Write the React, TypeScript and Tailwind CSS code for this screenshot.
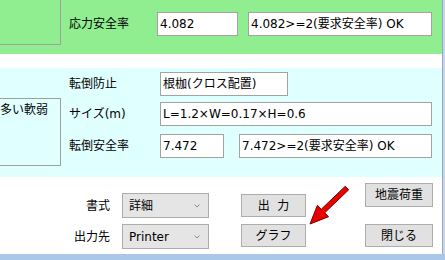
import { ReactNode } from 'react';

const font = { fontFamily: '"DejaVu Sans", "Noto Sans CJK JP", sans-serif' };

function Field({ w, children }: { w: string; children?: ReactNode }) {
    return (
        <div className={`${w} h-[24px] bg-white border border-[#a3a3a3] pl-[2px] flex items-center whitespace-nowrap overflow-hidden`}>
            {children}
        </div>
    );
}

function Btn({ w, h, mt, children }: { w: string; h: string; mt: string; children: ReactNode }) {
    return (
        <div className={`${w} ${h} ${mt} bg-[#e1e1e1] border border-[#adadad] flex items-center justify-center`}>
            {children}
        </div>
    );
}

function Select({ value, mt }: { value: string; mt: string }) {
    return (
        <div className={`w-[87px] h-[25px] ${mt} ml-[12px] bg-[#e5e5e5] border border-[#acacac] flex items-center justify-between pl-[6px] pr-[8px]`}>
            <span>{value}</span>
            <svg width="6" height="4" viewBox="0 0 6 4">
                <path d="M0.5 0.5 L3 3 L5.5 0.5" fill="none" stroke="#8a8a8a" strokeWidth="1" />
            </svg>
        </div>
    );
}

export default function App() {
    return (
        <div className="w-[445px] h-[260px] bg-[#aac6e8] flex flex-col text-[12px] text-black overflow-hidden relative" style={font}>
            <div className="flex h-[254px]">
                <div className="w-[442px] bg-white flex flex-col">
                    {/* green block */}
                    <div className="h-[54px] bg-[#90ee90] flex items-start">
                        <div className="w-[61px] h-[45px] border-r border-b border-[#a0a0a0]" />
                        <div className="flex items-center mt-[12px] ml-[8px]">
                            <div className="w-[88px]">応力安全率</div>
                            <Field w="w-[81px]">4.082</Field>
                            <div className="ml-[10px]">
                                <Field w="w-[184px]">4.082&gt;=2(要求安全率) OK</Field>
                            </div>
                        </div>
                    </div>

                    <div className="h-[14px]" />

                    {/* cyan block */}
                    <div className="h-[109px] bg-[#e0ffff] flex items-start">
                        <div className="w-[61px] h-[68px] mt-[30px] border-r border-t border-b border-[#a0a0a0] pt-[2px] overflow-hidden whitespace-nowrap">
                            多い軟弱
                        </div>
                        <div className="ml-[8px] mt-[4px] flex flex-col">
                            <div className="flex items-center">
                                <div className="w-[91px]">転倒防止</div>
                                <Field w="w-[128px]">根枷(クロス配置)</Field>
                            </div>
                            <div className="flex items-center mt-[6px]">
                                <div className="w-[91px]">サイズ(m)</div>
                                <Field w="w-[272px]">L=1.2×W=0.17×H=0.6</Field>
                            </div>
                            <div className="flex items-center mt-[8px]">
                                <div className="w-[91px]">転倒安全率</div>
                                <Field w="w-[64px]">7.472</Field>
                                <div className="ml-[15px]">
                                    <Field w="w-[193px]">7.472&gt;=2(要求安全率) OK</Field>
                                </div>
                            </div>
                        </div>
                    </div>

                    {/* bottom controls */}
                    <div className="flex items-start">
                        <div className="flex flex-col">
                            <div className="flex items-center mt-[16px]">
                                <div className="w-[110px] text-right">書式</div>
                                <Select value="詳細" mt="mt-0" />
                            </div>
                            <div className="flex items-center mt-[6px]">
                                <div className="w-[110px] text-right">出力先</div>
                                <Select value="Printer" mt="mt-0" />
                            </div>
                        </div>
                        <div className="flex flex-col ml-[32px]">
                            <Btn w="w-[65px]" h="h-[23px]" mt="mt-[17px]">出&nbsp;&nbsp;力</Btn>
                            <Btn w="w-[65px]" h="h-[23px]" mt="mt-[7px]">グラフ</Btn>
                        </div>
                        <div className="flex flex-col ml-[59px]">
                            <Btn w="w-[68px]" h="h-[24px]" mt="mt-[6px]">地震荷重</Btn>
                            <Btn w="w-[68px]" h="h-[23px]" mt="mt-[17px]">閉じる</Btn>
                        </div>
                    </div>
                </div>
                <div className="w-[1px] bg-[#93a7c0]" />
                <div className="w-[2px] bg-[#c8d8ec]" />
            </div>

            {/* annotation arrow */}
            <svg className="absolute left-0 top-0 pointer-events-none" width="445" height="260">
                <polygon
                    points="345.3,186.2 321.3,209.2 317.4,205.3 310,224 328.6,216.7 324.7,212.8 348.7,189.8"
                    fill="#e80000"
                    stroke="#7a0000"
                    strokeWidth="1"
                    strokeLinejoin="miter"
                />
            </svg>
        </div>
    );
}
